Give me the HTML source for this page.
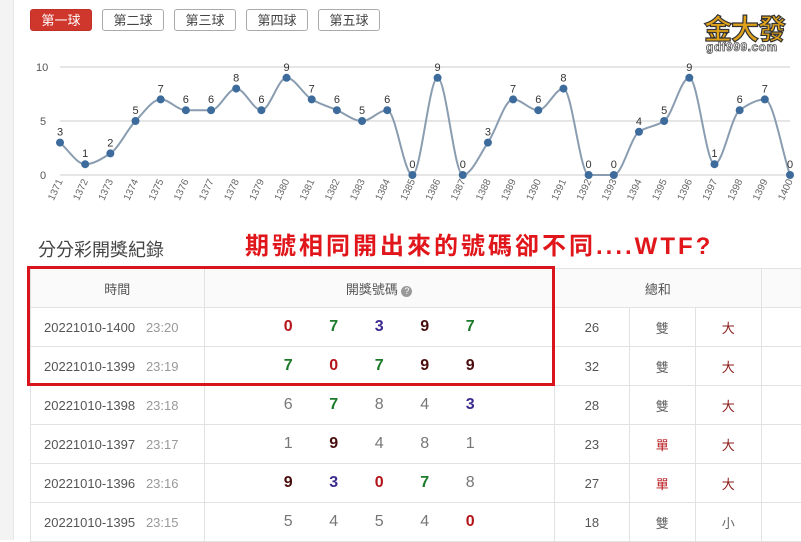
<!DOCTYPE html>
<html><head><meta charset="utf-8"><style>
body{margin:0;width:801px;height:540px;overflow:hidden;background:#fff;font-family:"Liberation Sans","Noto Sans CJK TC",sans-serif;position:relative}
.strip{position:absolute;left:0;top:0;width:13px;height:540px;background:#f3f3f3;border-right:1px solid #e6e6e6}
.btn{position:absolute;top:9px;height:22px;line-height:22px;border:1px solid #aaa;border-radius:3px;font-size:13px;color:#444;text-align:center;width:62px;box-sizing:border-box;background:#fff}
.btn.on{background:#d0372c;border-color:#c03026;color:#fff}
.title{position:absolute;left:38px;top:236px;font-size:18px;color:#444}
.wtf{position:absolute;left:245px;top:226px;font-size:24px;font-weight:bold;color:#e0161b;letter-spacing:3px;white-space:nowrap}
table{position:absolute;left:30px;top:268px;border-collapse:collapse;font-size:13px;color:#555}
td{border:1px solid #e2e2e2;height:38px;padding:0;text-align:center}
.n{display:inline-block;width:45.5px;font-size:16px;font-weight:bold;text-align:center}
.g{color:#777;font-weight:normal}.r{color:#b5141a}.gr{color:#1c7b2a}.p{color:#3c2a8f}.m{color:#4a0d0d}
.box{position:absolute;left:27px;top:266px;width:522px;height:114px;border:3px solid #d8151c}
</style></head><body>
<div class="strip"></div>
<div class="btn on" style="left:30px">第一球</div>
<div class="btn" style="left:102px">第二球</div>
<div class="btn" style="left:174px">第三球</div>
<div class="btn" style="left:246px">第四球</div>
<div class="btn" style="left:318px">第五球</div>
<div style="position:absolute;left:704px;top:8px;font-size:28px;font-weight:bold;color:#e0a21a;-webkit-text-stroke:1.2px #333;letter-spacing:-1px">金大發</div>
<div style="position:absolute;left:706px;top:40px;font-size:12px;font-weight:bold;color:#fff;-webkit-text-stroke:0.8px #555;letter-spacing:0.5px">gdf999.com</div>
<svg id="ch" width="801" height="215" style="position:absolute;left:0;top:0" font-family="Liberation Sans" font-size="11"></svg>
<div class="title">分分彩開獎紀錄</div>
<div class="wtf">期號相同開出來的號碼卻不同....WTF?</div>
<table>
<tr style="background:#fafafa"><td style="width:175px">時間</td><td style="width:351px">開獎號碼 <span style="display:inline-block;width:11px;height:11px;border-radius:50%;background:#999;color:#fff;font-size:9px;line-height:11px">?</span></td><td colspan="3" style="width:209px">總和</td><td style="width:40px;border-right:none"></td></tr>
</table>
<div class="box"></div>
<script>
const v=[3,1,2,5,7,6,6,8,6,9,7,6,5,6,0,9,0,3,7,6,8,0,0,4,5,9,1,6,7,0];
const X=i=>60+i*730/29,Y=d=>175-d*10.8;
let s='';
[67,121,175].forEach((y,k)=>{s+=`<line x1="60" x2="790" y1="${y}" y2="${y}" stroke="#ccc"/><text x="${k==0?36:40}" y="${y+4}" fill="#555">${['10','5','0'][k]}</text>`});
const n=v.length,h=730/29,ys=v.map(Y);
const dl=[];for(let i=0;i<n-1;i++)dl.push((ys[i+1]-ys[i])/h);
const m=[];for(let i=0;i<n;i++){if(i==0)m.push(dl[0]);else if(i==n-1)m.push(dl[n-2]);else{const a=dl[i-1],b=dl[i];m.push(a*b<=0?0:2/(1/a+1/b));}}
let p=`M${X(0)},${ys[0]}`;
for(let i=0;i<n-1;i++){p+=` C${X(i)+h/3},${ys[i]+m[i]*h/3} ${X(i+1)-h/3},${ys[i+1]-m[i+1]*h/3} ${X(i+1)},${ys[i+1]}`}
s+=`<path d="${p}" fill="none" stroke="#8a9db0" stroke-width="2"/>`;
v.forEach((d,i)=>{s+=`<circle cx="${X(i)}" cy="${Y(d)}" r="4" fill="#3d6b9c"/><text x="${X(i)}" y="${Y(d)-7}" text-anchor="middle" fill="#333">${d}</text><text transform="translate(${X(i)+3},181) rotate(-65)" text-anchor="end" fill="#666" font-size="10">${1371+i}</text>`});
document.getElementById('ch').innerHTML=s;
const rows=[['1400','23:20',[0,7,3,9,7],26,'雙','大'],['1399','23:19',[7,0,7,9,9],32,'雙','大'],['1398','23:18',[6,7,8,4,3],28,'雙','大'],['1397','23:17',[1,9,4,8,1],23,'單','大'],['1396','23:16',[9,3,0,7,8],27,'單','大'],['1395','23:15',[5,4,5,4,0],18,'雙','小']];
const cls={0:'r',7:'gr',3:'p',9:'m'};
const tb=document.querySelector('table');
rows.forEach(r=>{const tr=document.createElement('tr');
tr.innerHTML=`<td style="text-align:left;padding-left:13px;color:#555;height:38px">20221010-${r[0]}&nbsp;&nbsp;&nbsp;<span style="color:#999">${r[1]}</span></td><td style="text-align:left"><div style="padding-left:61px;white-space:nowrap">${r[2].map(n=>`<span class="n ${cls[n]?cls[n]:'g'}">${n}</span>`).join('')}</div></td><td style="width:76px">${r[3]}</td><td style="width:66px;color:${r[4]=='單'?'#b5141a':'#666'}">${r[4]}</td><td style="width:67px;color:${r[5]=='大'?'#8b1a1a':'#666'}">${r[5]}</td><td style="border-right:none"></td>`;
tb.appendChild(tr)});
</script>
</body></html>
